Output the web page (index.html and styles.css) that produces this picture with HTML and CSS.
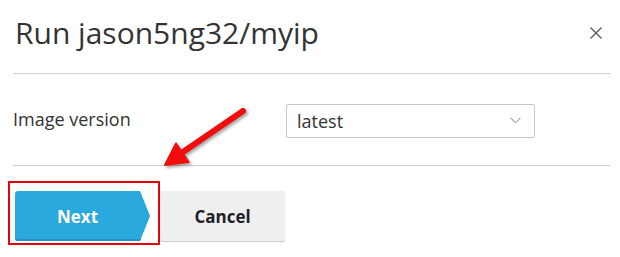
FILE: index.html
```html
<!DOCTYPE html>
<html>
<head>
<meta charset="utf-8">
<link rel="stylesheet" href="styles.css">
</head>
<body>
<div class="modal">
  <div class="header">
    <h1 class="title">Run jason5ng32/myip</h1>
    <button class="close" aria-label="Close">
      <svg width="12" height="12" viewBox="0 0 12 12"><path d="M0.5 0.5L11.5 11.5M11.5 0.5L0.5 11.5" stroke="#555" stroke-width="1.2" fill="none"/></svg>
    </button>
  </div>
  <div class="body">
    <label class="label">Image version</label>
    <div class="select">
      <span class="select-value">latest</span>
      <svg class="chevron" width="11" height="7" viewBox="0 0 11 7"><path d="M0.5 0.8L5.5 5.8L10.5 0.8" stroke="#777" stroke-width="1" fill="none"/></svg>
    </div>
  </div>
  <div class="footer">
    <button class="btn btn-next">Next</button>
    <button class="btn btn-cancel">Cancel</button>
  </div>
</div>
<div class="highlight"></div>
<svg class="annot-arrow" width="620" height="257" viewBox="0 0 620 257">
  <g class="arrow-shape">
    <line x1="243" y1="111" x2="180" y2="154" stroke="#f20d0d" stroke-width="6" stroke-linecap="round"/>
    <polygon points="165,165 176,143.5 188.5,162" fill="#f20d0d" stroke="#f20d0d" stroke-width="2" stroke-linejoin="round"/>
  </g>
</svg>
</body>
</html>
```
FILE: styles.css
```css
* { box-sizing: border-box; }
html, body { margin: 0; padding: 0; background: #fff; }
body {
  width: 620px;
  height: 257px;
  position: relative;
  overflow: hidden;
  font-family: "Open Sans", "Liberation Sans", sans-serif;
  color: #333;
}
.modal { padding: 0 10px 0 13px; }
.header {
  display: flex;
  align-items: flex-start;
  justify-content: space-between;
  height: 74px;
  padding-top: 13px;
  border-bottom: 1px solid #cfcfcf;
}
.title {
  margin: 0 0 0 2px;
  font-size: 30px;
  line-height: 40px;
  font-weight: 400;
  color: #333;
}
.close {
  border: 0;
  background: none;
  padding: 0;
  margin: 14px 8px 0 0;
  width: 12px;
  height: 12px;
  display: flex;
}
.body {
  display: flex;
  align-items: flex-start;
  padding: 30px 0 27px;
  border-bottom: 1px solid #cfcfcf;
}
.label {
  width: 273px;
  margin-top: 3px;
  font-size: 18px;
  line-height: 24px;
  color: #333;
}
.select {
  width: 249px;
  height: 34px;
  border: 1px solid #c8c8c8;
  border-radius: 2px;
  display: flex;
  align-items: center;
  justify-content: space-between;
  padding: 0 13px 0 10px;
}
.select-value { font-size: 18px; color: #333; }
.chevron { margin-top: -1px; }
.footer {
  display: flex;
  gap: 10px;
  padding: 25px 0 0 2px;
}
.btn {
  height: 50px;
  border: 0;
  font-family: "Open Sans", "Liberation Sans", sans-serif;
  font-size: 17px;
  font-weight: 700;
  cursor: pointer;
}
.btn-next {
  width: 135px;
  padding: 0 10px 0 0;
  background: #29a9dd;
  color: #fff;
  border-radius: 3px 0 0 3px;
  box-shadow: inset 0 -2px 0 #2293c2;
  clip-path: polygon(0 0, 125px 0, 100% 50%, 125px 100%, 0 100%);
}
.btn-cancel {
  width: 125px;
  background: #efefef;
  color: #1e1e2a;
  border-radius: 3px;
  box-shadow: 0 1px 1px #c8c8c8;
}
.highlight {
  position: absolute;
  left: 8px;
  top: 181px;
  width: 152px;
  height: 64px;
  border: 2px solid #e8000b;
}
.annot-arrow {
  position: absolute;
  left: 0;
  top: 0;
  pointer-events: none;
}
.arrow-shape { filter: drop-shadow(2px 2px 1.5px rgba(0,0,0,0.35)); }
```
